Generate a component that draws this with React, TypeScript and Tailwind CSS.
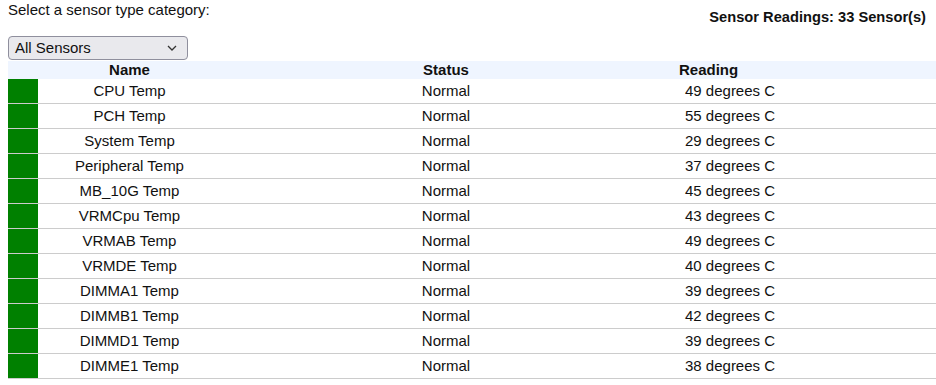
import React from 'react';

const sensors = [
  { name: 'CPU Temp', reading: '49 degrees C' },
  { name: 'PCH Temp', reading: '55 degrees C' },
  { name: 'System Temp', reading: '29 degrees C' },
  { name: 'Peripheral Temp', reading: '37 degrees C' },
  { name: 'MB_10G Temp', reading: '45 degrees C' },
  { name: 'VRMCpu Temp', reading: '43 degrees C' },
  { name: 'VRMAB Temp', reading: '49 degrees C' },
  { name: 'VRMDE Temp', reading: '40 degrees C' },
  { name: 'DIMMA1 Temp', reading: '39 degrees C' },
  { name: 'DIMMB1 Temp', reading: '42 degrees C' },
  { name: 'DIMMD1 Temp', reading: '39 degrees C' },
  { name: 'DIMME1 Temp', reading: '38 degrees C' },
];

export default function App() {
  return (
    <div className="w-[936px] h-[385px] overflow-hidden bg-white text-[15px] text-[#111] font-['Liberation_Sans',Arial,sans-serif]">
      {/* Top: category picker + count */}
      <div className="flex justify-between pl-[8px] pr-[10px]">
        <div className="pt-[1px]">
          <div className="leading-[17px]">Select a sensor type category:</div>
          <div className="mt-[18px] w-[180px] h-[24px] flex items-center justify-between pl-[6px] pr-[10px] pb-[1px] bg-[#e9e9ed] border border-[#8f8f9d] rounded-[4px] leading-[17px]">
            <span>All Sensors</span>
            <svg width="10" height="6" viewBox="0 0 10 6" fill="none" stroke="#333" strokeWidth="1.3">
              <path d="M1 1l4 4 4-4" />
            </svg>
          </div>
        </div>
        <div className="pt-[9px] text-[14.67px] font-bold leading-[16px]">Sensor Readings: 33 Sensor(s)</div>
      </div>

      {/* Table */}
      <div className="ml-[8px] mt-[1px]">
        <div className="grid grid-cols-[30px_183px_450px_1fr] h-[18px] items-center pb-[1px] bg-[#eff5ff] font-bold leading-[17px]">
          <div className="col-span-2 text-center pl-[30px]">Name</div>
          <div className="text-center">Status</div>
          <div className="pl-[8px]">Reading</div>
        </div>
        {sensors.map((s) => (
          <div key={s.name} className="grid grid-cols-[30px_183px_450px_1fr] h-[25px] border-b border-[#cccccc] leading-[17px]">
            <div className="bg-[#008000]" />
            <div className="flex items-center justify-center pb-[1px]">{s.name}</div>
            <div className="flex items-center justify-center pb-[1px]">Normal</div>
            <div className="flex items-center pl-[14px] pb-[1px]">{s.reading}</div>
          </div>
        ))}
      </div>
    </div>
  );
}
